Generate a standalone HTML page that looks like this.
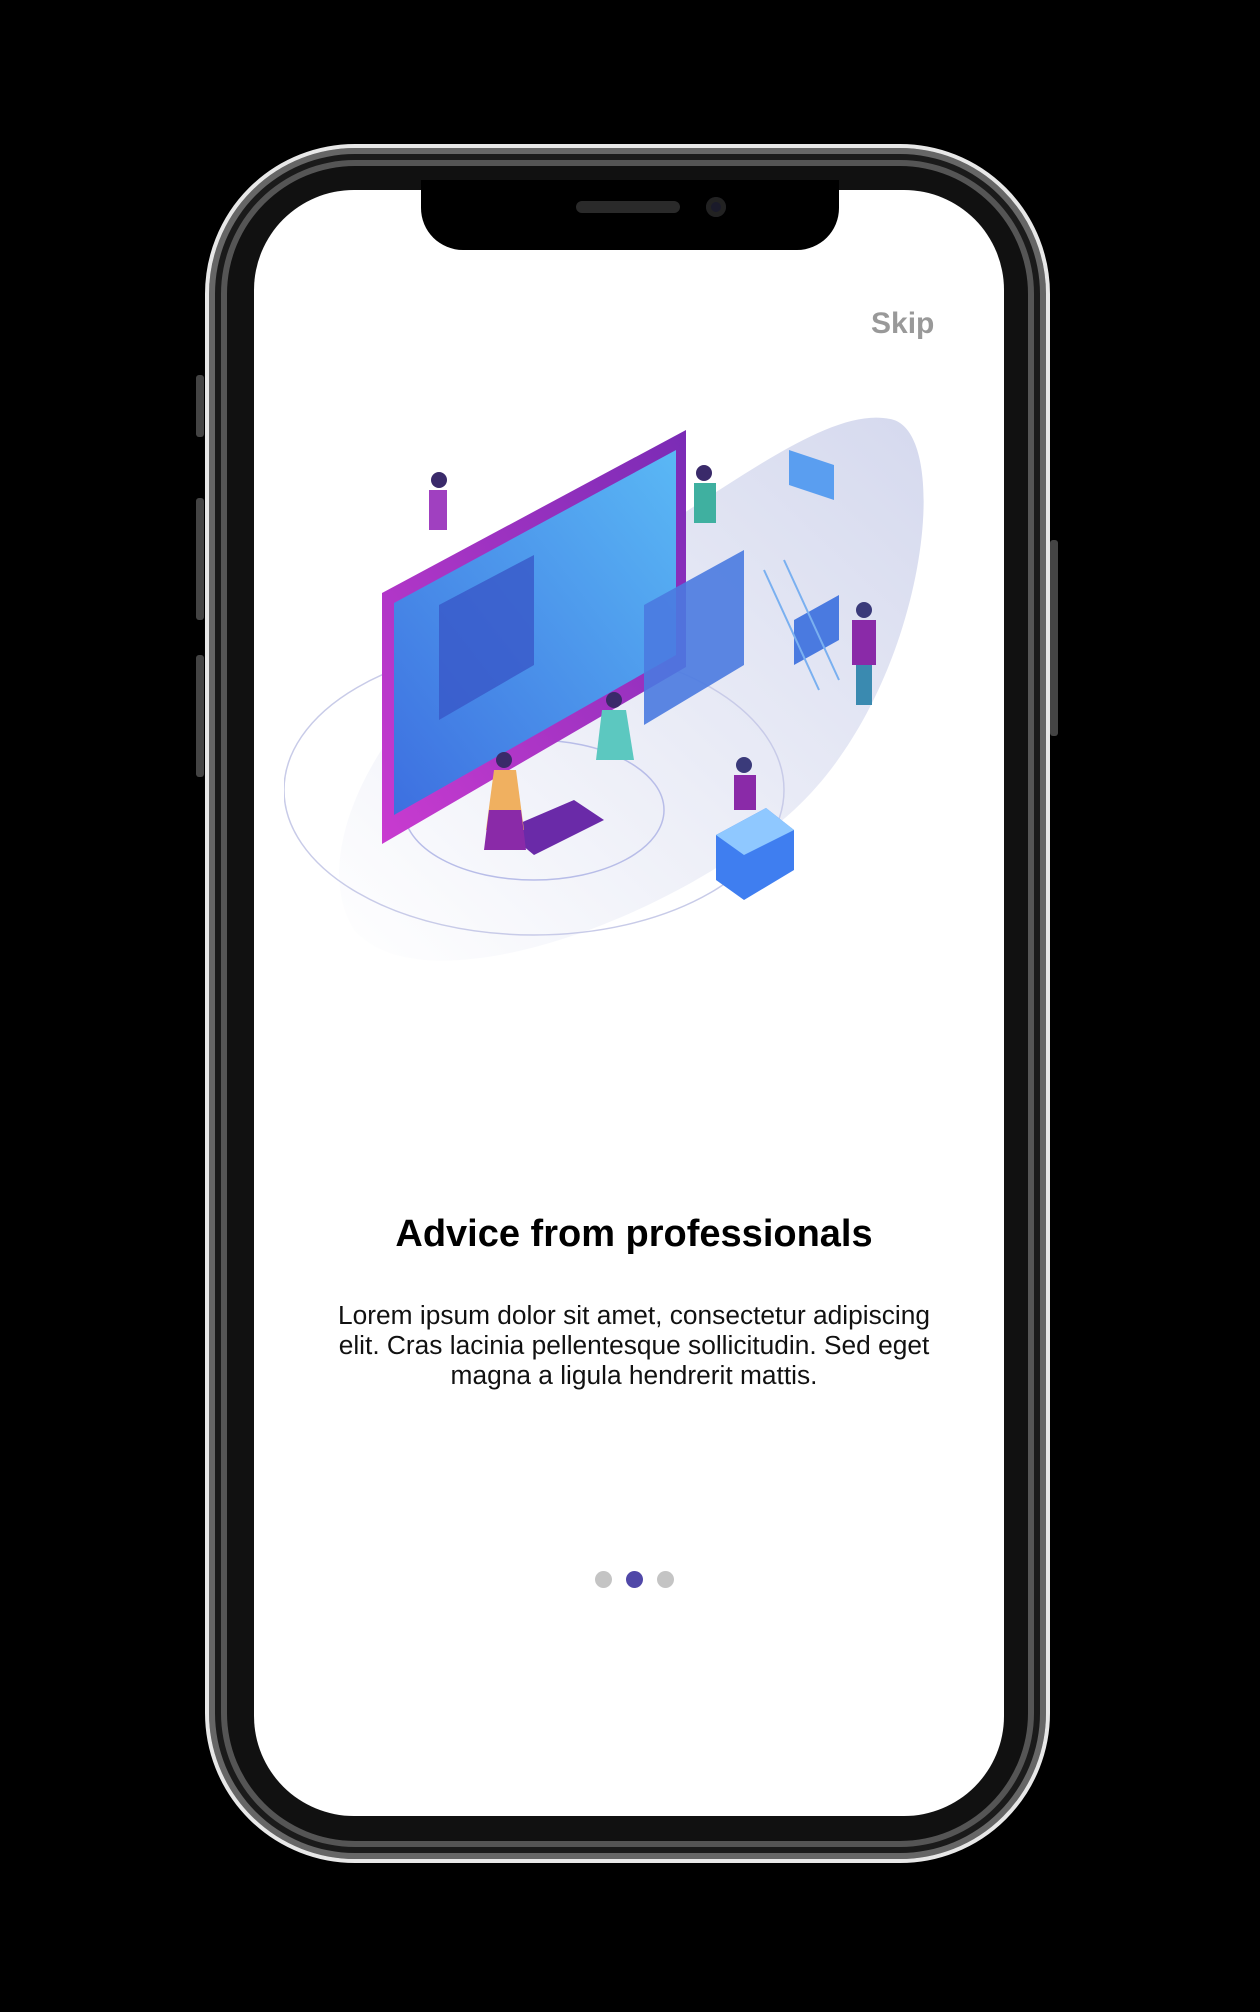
<!DOCTYPE html>
<html><head><meta charset="utf-8"><style>
html,body{margin:0;padding:0;background:#000;width:1260px;height:2012px;overflow:hidden;font-family:"Liberation Sans",Arial,sans-serif}
.abs{position:absolute}
#frame{left:205px;top:144px;width:845px;height:1719px;border-radius:150px;box-sizing:border-box;border:4px solid #e8e8e8;background:#111;box-shadow:inset 0 0 0 6px #666,inset 0 0 0 12px #1a1a1a,inset 0 0 0 18px #555}
#screen{left:254px;top:190px;width:750px;height:1626px;border-radius:100px;background:#fff;overflow:hidden}
#notch{left:421px;top:180px;width:418px;height:70px;background:#000;border-radius:0 0 42px 42px}
.btn{background:#444;border-radius:3px}
</style></head><body>
<div id="frame" class="abs"></div>
<div class="abs btn" style="left:196px;top:375px;width:8px;height:62px"></div>
<div class="abs btn" style="left:196px;top:498px;width:8px;height:122px"></div>
<div class="abs btn" style="left:196px;top:655px;width:8px;height:122px"></div>
<div class="abs btn" style="left:1050px;top:540px;width:8px;height:196px"></div>
<div id="screen" class="abs">
  <div class="abs" style="left:617px;top:117px;font-size:30px;font-weight:bold;color:#999">Skip</div>
  <svg class="abs" style="left:30px;top:200px" width="680" height="600" viewBox="0 0 680 600">
    <defs>
      <linearGradient id="bg" x1="0" y1="1" x2="1" y2="0"><stop offset="0" stop-color="#fff"/><stop offset="1" stop-color="#d5d9ee"/></linearGradient>
      <linearGradient id="mon" x1="0" y1="1" x2="1" y2="0"><stop offset="0" stop-color="#c93bd0"/><stop offset="1" stop-color="#7a2bb5"/></linearGradient>
      <linearGradient id="scr" x1="0" y1="1" x2="1" y2="0"><stop offset="0" stop-color="#3d6fe0"/><stop offset="1" stop-color="#5ab8f5"/></linearGradient>
    </defs>
    <path d="M70 540 C20 460 100 300 260 210 C420 120 540 10 610 30 C670 50 640 300 510 420 C390 530 140 620 70 540Z" fill="url(#bg)"/>
    <ellipse cx="250" cy="400" rx="250" ry="145" fill="none" stroke="#c8cbe8" stroke-width="1.5"/>
    <ellipse cx="250" cy="420" rx="130" ry="70" fill="none" stroke="#b8bde8" stroke-width="1.5"/>
    <path d="M98 203 L402 40 L402 277 L98 454Z" fill="url(#mon)"/>
    <path d="M110 213 L392 60 L392 265 L110 425Z" fill="url(#scr)"/>
    <path d="M155 215 L250 165 L250 275 L155 330Z" fill="#3858c8" opacity=".8"/>
    <path d="M360 215 L460 160 L460 275 L360 335Z" fill="#4a7ae0" opacity=".9"/>
    <path d="M220 440 L290 410 L320 430 L250 465Z" fill="#6a2aa8"/>
    <path d="M505 60 L550 75 L550 110 L505 95Z" fill="#5a9ef0"/>
    <path d="M510 230 L555 205 L555 250 L510 275Z" fill="#4a7ae0"/>
    <path d="M432 445 L482 418 L510 440 L510 480 L460 510 L432 490Z" fill="#3f7ef0"/>
    <path d="M432 445 L482 418 L510 440 L460 465Z" fill="#8fc8ff"/>
    <path d="M480 180 L535 300 M500 170 L555 290" stroke="#7ab0f0" stroke-width="2"/>
    <circle cx="155" cy="90" r="8" fill="#3a2a6a"/><rect x="145" y="100" width="18" height="40" fill="#a040c0"/>
    <circle cx="420" cy="83" r="8" fill="#3a2a6a"/><rect x="410" y="93" width="22" height="40" fill="#3fb0a0"/>
    <circle cx="580" cy="220" r="8" fill="#3a3a7a"/><rect x="568" y="230" width="24" height="45" fill="#8a2aa8"/><rect x="572" y="275" width="16" height="40" fill="#3a8ab0"/>
    <circle cx="330" cy="310" r="8" fill="#3a2a6a"/><path d="M318 320 L342 320 L350 370 L312 370Z" fill="#5cc8c0"/>
    <circle cx="220" cy="370" r="8" fill="#3a2a6a"/><path d="M210 380 L232 380 L240 440 L202 440Z" fill="#f0b060"/><path d="M205 420 L237 420 L242 460 L200 460Z" fill="#8a2aa8"/>
    <circle cx="460" cy="375" r="8" fill="#3a3a7a"/><rect x="450" y="385" width="22" height="35" fill="#8a2aa8"/>
  </svg>
  <div class="abs" style="left:0;width:760px;top:1023px;text-align:center;font-size:38px;font-weight:bold;color:#000">Advice from professionals</div>
  <div class="abs" style="left:70px;width:620px;top:1110px;text-align:center;font-size:26.3px;line-height:30px;color:#111">Lorem ipsum dolor sit amet, consectetur adipiscing elit. Cras lacinia pellentesque sollicitudin. Sed eget magna a ligula hendrerit mattis.</div>
  <div class="abs" style="left:341px;top:1381px;width:17px;height:17px;border-radius:50%;background:#c4c4c4"></div>
  <div class="abs" style="left:372px;top:1381px;width:17px;height:17px;border-radius:50%;background:#5048a8"></div>
  <div class="abs" style="left:403px;top:1381px;width:17px;height:17px;border-radius:50%;background:#c4c4c4"></div>
</div>
<div id="notch" class="abs">
  <div class="abs" style="left:155px;top:21px;width:104px;height:12px;border-radius:6px;background:#2a2a2a"></div>
  <div class="abs" style="left:285px;top:17px;width:20px;height:20px;border-radius:50%;background:#1a1a2a;box-shadow:inset 0 0 0 5px #222"></div>
</div>
</body></html>
